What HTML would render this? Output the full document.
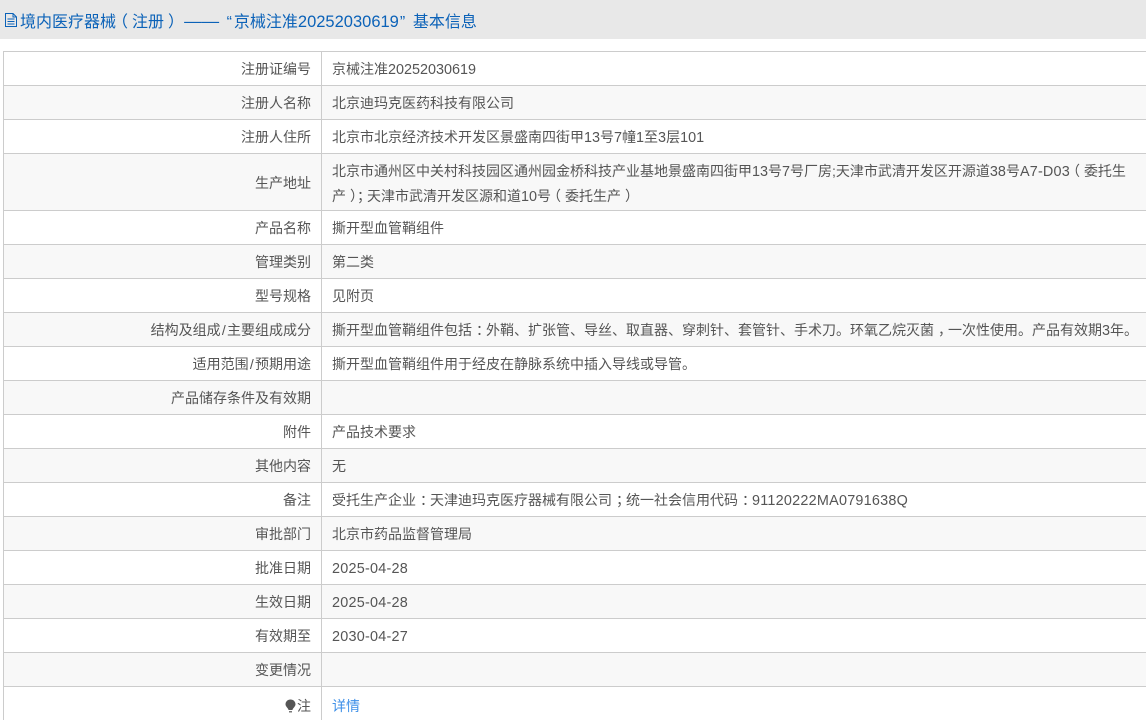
<!DOCTYPE html>
<html lang="zh">
<head>
<meta charset="utf-8">
<style>
html,body{margin:0;padding:0;width:1146px;height:718px;overflow:hidden;background:#fff;font-family:"Liberation Sans","Noto Sans CJK SC",sans-serif;color:#555;font-size:14px}
.head{position:absolute;left:0;top:0;width:1146px;height:39px;background:#e8e8e8;color:#0b62b8;font-size:16px;line-height:39px;white-space:nowrap}
.head svg{position:absolute;left:4px;top:12px}
.head>span{position:absolute;left:20px;top:2px}
.head i{font-size:16.5px}
.wrap{position:absolute;left:3px;top:51px;width:1200px}
.r{position:relative;box-sizing:border-box;border-top:1px solid #ccc;height:34px;width:1200px;border-left:1px solid #ccc;line-height:35px}
.r.o{background:#f8f8f8}
.l{position:absolute;left:0;top:0;bottom:0;width:307px;text-align:right;white-space:nowrap}
.v{position:absolute;left:317px;top:0;bottom:0;border-left:1px solid #ccc;padding-left:10px;white-space:nowrap}
.t{line-height:24px;padding-top:5px}
a{color:#3d8fe8;text-decoration:none}
.bulb{display:inline-block;vertical-align:-2px;margin-right:1px}
i{font-style:normal;font-size:14.4px}
i.d{letter-spacing:.24px}
i.q{letter-spacing:.24px}
i.a{letter-spacing:.2px}
s{text-decoration:none;margin:0 1.25px}
b{font-weight:normal;position:relative}
b.lp{left:-4px}
b.rp{left:4px}
b.c{left:4px}
.head b.lp{left:-4px}
.head b.rp{left:4px}
.dash{font-size:17.5px;margin-left:4px;font-style:normal}
.q1{margin:0 2px 0 7.5px;font-style:normal}
.q2{margin:0 7.7px 0 1px;font-style:normal}
</style>
</head>
<body>
<div class="head">
<svg width="14" height="16" viewBox="0 0 14 16"><path d="M1.5 1.5H9L12.5 5V14.5H1.5ZM9 1.5V5H12.5M3.5 7H10.5M3.5 9.5H10.5M3.5 12H10.5" fill="none" stroke="#0b62b8" stroke-width="1"/></svg>
<span>境内医疗器械<b class="lp">（</b>注册<b class="rp">）</b><em class="dash">——</em><em class="q1">“</em>京械注准<i>20252030619</i><em class="q2">”</em>基本信息</span>
</div>
<div class="wrap">
<div class="r"><div class="l">注册证编号</div><div class="v">京械注准<i>20252030619</i></div></div>
<div class="r o"><div class="l">注册人名称</div><div class="v">北京迪玛克医药科技有限公司</div></div>
<div class="r"><div class="l">注册人住所</div><div class="v">北京市北京经济技术开发区景盛南四街甲<i>13</i>号<i>7</i>幢<i>1</i>至<i>3</i>层<i>101</i></div></div>
<div class="r o" style="height:57px"><div class="l" style="line-height:58px">生产地址</div><div class="v t">北京市通州区中关村科技园区通州园金桥科技产业基地景盛南四街甲<i>13</i>号<i>7</i>号厂房;天津市武清开发区开源道<i>38</i>号<i class="a">A7-D03</i><b class="lp">（</b>委托生<br>产<b class="rp">）</b><b class="c">；</b>天津市武清开发区源和道<i>10</i>号<b class="lp">（</b>委托生产<b class="rp">）</b></div></div>
<div class="r"><div class="l">产品名称</div><div class="v">撕开型血管鞘组件</div></div>
<div class="r o"><div class="l">管理类别</div><div class="v">第二类</div></div>
<div class="r"><div class="l">型号规格</div><div class="v">见附页</div></div>
<div class="r o"><div class="l">结构及组成<s>/</s>主要组成成分</div><div class="v">撕开型血管鞘组件包括<b class="c">：</b>外鞘、扩张管、导丝、取直器、穿刺针、套管针、手术刀。环氧乙烷灭菌<b class="c">，</b>一次性使用。产品有效期<i>3</i>年。</div></div>
<div class="r"><div class="l">适用范围<s>/</s>预期用途</div><div class="v">撕开型血管鞘组件用于经皮在静脉系统中插入导线或导管。</div></div>
<div class="r o"><div class="l">产品储存条件及有效期</div><div class="v"></div></div>
<div class="r"><div class="l">附件</div><div class="v">产品技术要求</div></div>
<div class="r o"><div class="l">其他内容</div><div class="v">无</div></div>
<div class="r"><div class="l">备注</div><div class="v">受托生产企业<b class="c">：</b>天津迪玛克医疗器械有限公司<b class="c">；</b>统一社会信用代码<b class="c">：</b><i class="q">91120222MA0791638Q</i></div></div>
<div class="r o"><div class="l">审批部门</div><div class="v">北京市药品监督管理局</div></div>
<div class="r"><div class="l">批准日期</div><div class="v"><i class="d">2025-04-28</i></div></div>
<div class="r o"><div class="l">生效日期</div><div class="v"><i class="d">2025-04-28</i></div></div>
<div class="r"><div class="l">有效期至</div><div class="v"><i class="d">2030-04-27</i></div></div>
<div class="r o"><div class="l">变更情况</div><div class="v"></div></div>
<div class="r" style="line-height:39px"><div class="l"><svg class="bulb" width="11" height="14" viewBox="0 0 11 14"><path d="M5.5 0.5C8.3 0.5 10.5 2.6 10.5 5.3C10.5 7.6 8.3 8.6 7.4 11H3.6C2.7 8.6 0.5 7.6 0.5 5.3C0.5 2.6 2.7 0.5 5.5 0.5Z" fill="#555"/><path d="M4 12H7V13.5H4Z" fill="#777"/></svg>注</div><div class="v"><a>详情</a></div></div>
</div>
</body>
</html>
